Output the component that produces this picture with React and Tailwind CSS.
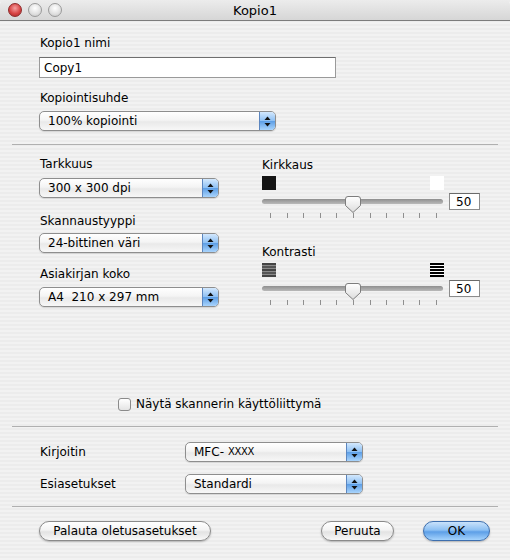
import React from "react";

const font = "font-['DejaVu_Sans','Lucida_Grande',sans-serif]";

function Arrows() {
  return (
    <svg width="7" height="11" viewBox="0 0 7 11">
      <path d="M3.5 0.5 L6.5 4 H0.5 Z" fill="#111" />
      <path d="M3.5 10.5 L6.5 7 H0.5 Z" fill="#111" />
    </svg>
  );
}

function Popup({ width, children }) {
  return (
    <div
      className={`flex h-[20px] ${width} rounded-[5px] border border-[#8e8e8e] bg-[linear-gradient(to_bottom,#ffffff,#f4f4f4_45%,#e9e9e9_55%,#f7f7f7)] shadow-[0_1px_1px_rgba(0,0,0,0.12)] overflow-hidden`}
    >
      <div className="flex-1 flex items-center pl-[8px] text-[12px] leading-none text-black">
        {children}
      </div>
      <div className="w-[16px] flex items-center justify-center border-l border-[#5c86bf] bg-[linear-gradient(to_bottom,#d3e8fd,#8fc1f4_48%,#5e9fe6_52%,#a9d4fc)]">
        <Arrows />
      </div>
    </div>
  );
}

function Thumb() {
  return (
    <svg className="absolute left-[83px] top-[3px]" width="16" height="17" viewBox="0 0 16 17">
      <defs>
        <linearGradient id="tg" x1="0" y1="0" x2="0" y2="1">
          <stop offset="0" stopColor="#ffffff" />
          <stop offset="1" stopColor="#dcdcdc" />
        </linearGradient>
      </defs>
      <path
        d="M0.5 3 Q0.5 0.5 3 0.5 H13 Q15.5 0.5 15.5 3 V9.5 L8 16.5 L0.5 9.5 Z"
        fill="url(#tg)"
        stroke="#7d7d7d"
      />
    </svg>
  );
}

function Slider() {
  return (
    <div>
      <div className="flex items-center">
        <div className="relative w-[181px] h-[17px] flex items-center">
          <div className="w-full h-[5px] rounded-full bg-[linear-gradient(to_bottom,#8f8f8f,#b9b9b9)]" />
          <Thumb />
        </div>
        <div className="ml-[6px] w-[31px] h-[17px] border border-[#8c8c8c] border-t-[#6a6a6a] bg-white text-[12px] leading-none flex items-center pl-[6px]">
          50
        </div>
      </div>
      <div className="mt-[3px] w-[181px] pl-[8px] pr-[6px] flex justify-between">
        {Array.from({ length: 11 }).map((_, i) => (
          <div key={i} className="w-[1px] h-[5px] bg-[#8f8f8f]" />
        ))}
      </div>
    </div>
  );
}

function Button({ children, width, primary }) {
  return (
    <div
      className={`h-[20px] ${width} rounded-full border flex items-center justify-center text-[12px] leading-none text-black shadow-[0_1px_2px_rgba(0,0,0,0.25)] ${
        primary
          ? "border-[#3e6fae] bg-[linear-gradient(to_bottom,#c9e2fb,#8cc0f3_45%,#5d9fe7_55%,#a5d3fd)]"
          : "border-[#8a8a8a] bg-[linear-gradient(to_bottom,#ffffff,#f3f3f3_45%,#e3e3e3_55%,#f8f8f8)]"
      }`}
    >
      {children}
    </div>
  );
}

function Separator() {
  return <div className="mx-[12px] h-[2px] border-t border-[#b0b0b0] border-b-white" />;
}

function Light({ red }) {
  return (
    <div
      className={`w-[14px] h-[14px] rounded-full border ${
        red
          ? "border-[#8e2a2a] bg-[radial-gradient(circle_at_50%_35%,#f5a0a0,#d84545_55%,#a52323)]"
          : "border-[#9a9a9a] bg-[radial-gradient(circle_at_50%_35%,#ffffff,#e2e2e2_55%,#c4c4c4)]"
      }`}
    />
  );
}

export default function App() {
  return (
    <div
      className={`${font} w-[510px] h-[560px] overflow-hidden text-[12px] text-black bg-[image:repeating-linear-gradient(to_bottom,#ececec_0px,#ececec_2px,#f2f2f2_2px,#f2f2f2_4px)]`}
    >
      {/* Title bar */}
      <div className="h-[21px] grid grid-cols-[1fr_auto_1fr] items-center rounded-t-[5px] border-b border-[#7c7c7c] bg-[linear-gradient(to_bottom,#ececec,#d6d6d6)]">
        <div className="flex items-center gap-[6px] pl-[8px]">
          <Light red />
          <Light />
          <Light />
        </div>
        <div className="text-[13px] leading-none">Kopio1</div>
        <div />
      </div>

      {/* Name & ratio */}
      <div className="pl-[39px] pt-[14px]">
        <div className="h-[16px] leading-[16px] pl-[1px]">Kopio1 nimi</div>
        <div className="mt-[6px] w-[297px] h-[21px] bg-white border border-[#9a9a9a] border-t-[#6e6e6e] flex items-center pl-[4px] text-[12px]">
          Copy1
        </div>
        <div className="mt-[12px] h-[16px] leading-[16px] pl-[1px]">Kopiointisuhde</div>
        <div className="mt-[5px]">
          <Popup width="w-[237px]">100% kopiointi</Popup>
        </div>
      </div>

      <div className="mt-[13px]">
        <Separator />
      </div>

      {/* Scan settings */}
      <div className="flex pl-[39px]">
        <div className="w-[223px]">
          <div className="mt-[10px] h-[16px] leading-[16px] pl-[1px]">Tarkkuus</div>
          <div className="mt-[6px]">
            <Popup width="w-[180px]">300 x 300 dpi</Popup>
          </div>
          <div className="mt-[15px] h-[16px] leading-[16px] pl-[1px]">Skannaustyyppi</div>
          <div className="mt-[4px]">
            <Popup width="w-[180px]">24-bittinen väri</Popup>
          </div>
          <div className="mt-[13px] h-[16px] leading-[16px] pl-[1px]">Asiakirjan koko</div>
          <div className="mt-[5px]">
            <Popup width="w-[180px]">
              <span className="whitespace-pre">A4  210 x 297 mm</span>
            </Popup>
          </div>
        </div>

        <div>
          <div className="mt-[11px] h-[16px] leading-[16px]">Kirkkaus</div>
          <div className="mt-[3px] w-[182px] flex justify-between">
            <div className="w-[14px] h-[14px] bg-[#141414]" />
            <div className="w-[14px] h-[14px] bg-white" />
          </div>
          <div className="mt-[3px]">
            <Slider />
          </div>

          <div className="mt-[26px] h-[16px] leading-[16px]">Kontrasti</div>
          <div className="mt-[3px] w-[182px] flex justify-between">
            <div className="w-[14px] h-[14px] flex flex-col justify-between bg-[#8a8a8a]">
              <div className="h-[2px] bg-[#444]" />
              <div className="h-[2px] bg-[#555]" />
              <div className="h-[2px] bg-[#444]" />
              <div className="h-[2px] bg-[#555]" />
              <div className="h-[2px] bg-[#444]" />
            </div>
            <div className="w-[14px] h-[14px] flex flex-col justify-between bg-white">
              <div className="h-[2px] bg-black" />
              <div className="h-[2px] bg-black" />
              <div className="h-[2px] bg-black" />
              <div className="h-[2px] bg-black" />
              <div className="h-[2px] bg-black" />
            </div>
          </div>
          <div className="mt-[3px]">
            <Slider />
          </div>
        </div>
      </div>

      {/* Checkbox */}
      <div className="mt-[90px] pl-[118px] flex items-center gap-[5px] h-[14px]">
        <div className="w-[13px] h-[13px] rounded-[3px] border border-[#8a8a8a] bg-[linear-gradient(to_bottom,#ffffff,#e4e4e4)]" />
        <span className="leading-none">Näytä skannerin käyttöliittymä</span>
      </div>

      <div className="mt-[15px]">
        <Separator />
      </div>

      {/* Printer */}
      <div className="pl-[40px]">
        <div className="mt-[14px] flex items-center">
          <div className="w-[145px]">Kirjoitin</div>
          <Popup width="w-[178px]">
            MFC-<span className="ml-[4px] text-[10px] tracking-[-0.3px]">XXXX</span>
          </Popup>
        </div>
        <div className="mt-[12px] flex items-center">
          <div className="w-[145px]">Esiasetukset</div>
          <Popup width="w-[178px]">Standardi</Popup>
        </div>
      </div>

      <div className="mt-[12px]">
        <Separator />
      </div>

      {/* Buttons */}
      <div className="mt-[13px] flex items-center pl-[39px] pr-[20px]">
        <Button width="w-[172px]">Palauta oletusasetukset</Button>
        <div className="flex-1" />
        <Button width="w-[73px]">Peruuta</Button>
        <div className="w-[29px]" />
        <Button width="w-[67px]" primary>
          OK
        </Button>
      </div>
    </div>
  );
}
